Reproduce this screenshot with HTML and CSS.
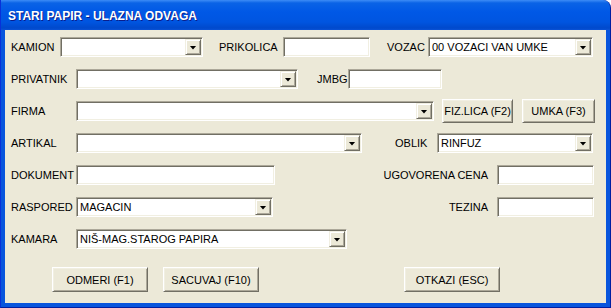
FILE: index.html
```html
<!DOCTYPE html>
<html lang="sr">
<head>
    <meta charset="UTF-8">
    <meta name="viewport" content="width=device-width, initial-scale=1.0">
    <title>Stari papir - ulazna odvaga</title>
    <link rel="stylesheet" href="styles.css">
</head>
<body>
    <div class="window">
        <div class="titlebar">
            <span class="title">STARI PAPIR - ULAZNA ODVAGA</span>
        </div>
        <div class="client">
            <div class="row">
                <span class="lbl lbl-kamion">KAMION</span>
                <div class="combo cb-kamion"><span class="val"></span><span class="drop"></span></div>
                <span class="lbl lbl-prikolica">PRIKOLICA</span>
                <div class="field in-prikolica"></div>
                <span class="lbl lbl-vozac">VOZAC</span>
                <div class="combo cb-vozac"><span class="val">00 VOZACI VAN UMKE</span><span class="drop"></span></div>
            </div>
            <div class="row">
                <span class="lbl lbl-main">PRIVATNIK</span>
                <div class="combo cb-privatnik"><span class="val"></span><span class="drop"></span></div>
                <span class="lbl lbl-jmbg">JMBG</span>
                <div class="field in-jmbg"></div>
            </div>
            <div class="row">
                <span class="lbl lbl-main">FIRMA</span>
                <div class="combo cb-firma"><span class="val"></span><span class="drop"></span></div>
                <button class="btn btn-fiz">FIZ.LICA (F2)</button>
                <button class="btn btn-umka">UMKA (F3)</button>
            </div>
            <div class="row">
                <span class="lbl lbl-main">ARTIKAL</span>
                <div class="combo cb-artikal"><span class="val"></span><span class="drop"></span></div>
                <span class="lbl lbl-oblik">OBLIK</span>
                <div class="combo cb-oblik"><span class="val">RINFUZ</span><span class="drop"></span></div>
            </div>
            <div class="row">
                <span class="lbl lbl-main">DOKUMENT</span>
                <div class="field in-dokument"></div>
                <span class="lbl lbl-right">UGOVORENA CENA</span>
                <div class="field in-small"></div>
            </div>
            <div class="row">
                <span class="lbl lbl-main">RASPORED</span>
                <div class="combo cb-raspored"><span class="val">MAGACIN</span><span class="drop"></span></div>
                <span class="lbl lbl-right">TEZINA</span>
                <div class="field in-small"></div>
            </div>
            <div class="row">
                <span class="lbl lbl-main">KAMARA</span>
                <div class="combo cb-kamara"><span class="val">NIŠ-MAG.STAROG PAPIRA</span><span class="drop"></span></div>
            </div>
            <div class="actions">
                <button class="btn btn-big btn-odmeri">ODMERI (F1)</button>
                <button class="btn btn-big btn-sacuvaj">SACUVAJ (F10)</button>
                <button class="btn btn-big btn-otkazi">OTKAZI (ESC)</button>
            </div>
        </div>
    </div>
</body>
</html>
```
FILE: styles.css
```css
* {
    box-sizing: border-box;
}

body {
    margin: 0;
    padding: 0;
    background: #ffffff;
    font-family: "Liberation Sans", Arial, sans-serif;
    font-size: 11px;
    color: #000;
}

.window {
    width: 611px;
    height: 308px;
    background: #0855dd;
    border-top-right-radius: 8px;
    padding: 0 4px 4px 4px;
    border-left: 1px solid #0831d9;
    border-bottom: 1px solid #001ea0;
    border-right: 1px solid #001ea0;
    display: flex;
    flex-direction: column;
    overflow: hidden;
}

.titlebar {
    height: 30px;
    margin: 0 -4px;
    padding-left: 7px;
    display: flex;
    align-items: center;
    background: linear-gradient(#3d8cf6 0, #0a63e6 3px, #0058e6 12px, #0055e0 22px, #0049cc 28px, #0a52d6 30px);
    border-top-right-radius: 7px;
}

.title {
    color: #fff;
    font-weight: bold;
    font-size: 12px;
    text-shadow: 1px 1px 0 #0a1e8c;
    padding-top: 1px;
}

.client {
    flex: 1;
    background: #ece9d8;
    padding: 1px 12px 0 6px;
}

.row {
    height: 32px;
    display: flex;
    align-items: center;
}

.lbl {
    white-space: nowrap;
    flex-shrink: 0;
}

.lbl-kamion { width: 49px; }
.lbl-prikolica { margin-left: 16px; width: 64px; }
.lbl-vozac { margin-left: 17px; width: 41px; }
.lbl-main { width: 65px; }
.lbl-jmbg { margin-left: 19px; width: 31px; }
.lbl-oblik { margin-left: 33px; width: 42px; }

.lbl-right {
    flex: 1;
    text-align: right;
    padding-right: 9px;
}

/* sunken 3D edit / combo box */
.field,
.combo {
    height: 20px;
    background: #fff;
    border: 1px solid;
    border-color: #aca899 #fff #fff #aca899;
    box-shadow: inset 1px 1px 0 #716f64, inset -1px -1px 0 #f1efe2;
    flex-shrink: 0;
}

.combo {
    display: flex;
    align-items: center;
    padding: 1px;
}

.val {
    flex: 1;
    padding-left: 2px;
    white-space: nowrap;
    overflow: hidden;
}

.drop {
    width: 16px;
    height: 16px;
    background: #ece9d8;
    border: 1px solid;
    border-color: #f1efe2 #716f64 #716f64 #f1efe2;
    box-shadow: inset 1px 1px 0 #fff, inset -1px -1px 0 #aca899;
    display: flex;
    align-items: center;
    justify-content: center;
}

.drop::after {
    content: "";
    width: 7px;
    height: 4px;
    background: #000;
    clip-path: polygon(0 0, 100% 0, 50% 100%);
    margin-top: 1px;
}

.cb-kamion { width: 143px; }
.in-prikolica { width: 87px; }
.cb-vozac { width: 165px; }
.cb-privatnik { width: 222px; }
.in-jmbg { width: 94px; }
.cb-firma { width: 358px; }
.cb-artikal { width: 286px; }
.cb-oblik { width: 156px; }
.in-dokument { width: 199px; }
.in-small { width: 97px; }
.cb-raspored { width: 197px; }
.cb-kamara { width: 271px; }

/* raised 3D buttons */
.btn {
    font-family: "Liberation Sans", Arial, sans-serif;
    font-size: 11px;
    color: #000;
    background: #ece9d8;
    border: 1px solid;
    border-color: #fff #716f64 #716f64 #fff;
    box-shadow: inset 1px 1px 0 #f1efe2, inset -1px -1px 0 #aca899;
    padding: 0;
    flex-shrink: 0;
}

.btn-fiz {
    margin-left: 8px;
    width: 71px;
    height: 24px;
}

.btn-umka {
    margin-left: 9px;
    width: 73px;
    height: 24px;
}

.actions {
    display: flex;
    margin-top: 12px;
}

.btn-big {
    width: 96px;
    height: 25px;
}

.btn-odmeri { margin-left: 41px; }
.btn-sacuvaj { margin-left: 15px; }
.btn-otkazi { margin-left: 145px; }
```
